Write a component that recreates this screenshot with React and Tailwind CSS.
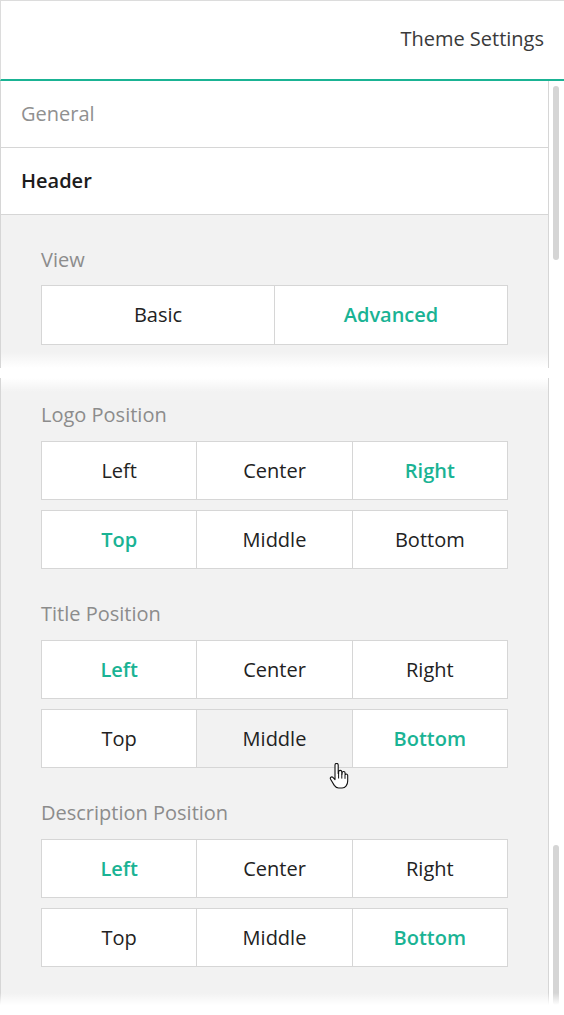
import React from "react";

const GREEN = "text-[#1ab394] font-semibold";

const HandCursor = () => (
  <svg width="20" height="27" viewBox="0 0 20 27" className="absolute left-[132px] top-[53px] pointer-events-none">
    <path
      d="M6 2a1.6 1.6 0 0 1 3.2 0v8.5h.4V9a1.6 1.6 0 0 1 3.2 0v2h.3v-1a1.5 1.5 0 0 1 3 0v1.5h.2a1.4 1.4 0 0 1 2.4 1V18c0 3.5-2.2 7-5.6 7H9.6c-2 0-3.2-1-4.3-2.6L1.6 16.2a1.5 1.5 0 0 1 2.3-1.9L6 16.6Z"
      fill="#fff"
      stroke="#111"
      strokeWidth="1.1"
      strokeLinejoin="round"
    />
    <path d="M9.6 10.5v5M12.8 11v4.6M16 12v3.8" stroke="#111" strokeWidth="1" fill="none" />
  </svg>
);

const Segment = ({ items, active, hovered, tall }) => (
  <div
    className={`flex border border-[#d6d6d6] bg-white divide-x divide-[#d6d6d6] ${tall ? "h-[60px]" : "h-[59px]"}`}
  >
    {items.map((item) => (
      <div
        key={item}
        className={`relative flex-1 flex items-center justify-center text-[20px] ${
          item === active ? GREEN : "text-[#222]"
        } ${item === hovered ? "bg-[#f2f2f2]" : ""}`}
      >
        {item}
        {item === hovered && <HandCursor />}
      </div>
    ))}
  </div>
);

const Group = ({ label, rows }) => (
  <div className="pt-[11px] pb-[22px]">
    <div className="h-[24px] leading-[24px] text-[20px] text-[#8c8c8c] mb-[14px]">{label}</div>
    <div className="flex flex-col gap-[10px]">
      {rows.map((r, i) => (
        <Segment key={i} items={r.items} active={r.active} hovered={r.hovered} />
      ))}
    </div>
  </div>
);

export default function App() {
  return (
    <div className="relative w-[564px] h-[1015px] overflow-hidden bg-white font-['Open_Sans',sans-serif]">
      <header className="h-[81px] border-t border-l border-[#dcdcdc] border-b-2 border-b-[#1ab394] flex items-center justify-end pr-[20px] pb-[2px] text-[20px] text-[#3a3a3a]">
        Theme Settings
      </header>

      {/* upper part */}
      <div className="flex">
        <div className="w-[549px] border-l border-r border-[#d6d6d6]">
          <div className="h-[67px] border-b border-[#d6d6d6] flex items-center pl-[20px] text-[20px] text-[#909090]">
            General
          </div>
          <div className="h-[67px] border-b border-[#d6d6d6] flex items-center pl-[20px] text-[20px] font-semibold text-[#1c1c1c]">
            Header
          </div>
          <div className="bg-[#f2f2f2] px-[40px] pt-[33px] pb-[7px]">
            <div className="h-[24px] leading-[24px] text-[20px] text-[#8c8c8c] mb-[13px]">View</div>
            <Segment items={["Basic", "Advanced"]} active="Advanced" tall />
          </div>
          <div className="h-[16px] bg-linear-to-b from-[#f2f2f2] to-white" />
        </div>
        <div className="w-[15px]">
          <div className="ml-[4px] mt-[5px] w-[6px] h-[174px] rounded-full bg-[#d5d5d5]" />
        </div>
      </div>

      <div className="h-[10px] bg-white" />

      {/* lower part */}
      <div className="flex">
        <div className="w-[549px] border-l border-r border-[#d6d6d6]">
          <div className="h-[14px] bg-linear-to-b from-white to-[#f2f2f2]" />
          <div className="bg-[#f2f2f2] px-[40px] pb-[60px]">
            <Group
              label="Logo Position"
              rows={[
                { items: ["Left", "Center", "Right"], active: "Right" },
                { items: ["Top", "Middle", "Bottom"], active: "Top" },
              ]}
            />
            <Group
              label="Title Position"
              rows={[
                { items: ["Left", "Center", "Right"], active: "Left" },
                { items: ["Top", "Middle", "Bottom"], active: "Bottom", hovered: "Middle" },
              ]}
            />
            <Group
              label="Description Position"
              rows={[
                { items: ["Left", "Center", "Right"], active: "Left" },
                { items: ["Top", "Middle", "Bottom"], active: "Bottom" },
              ]}
            />
          </div>
        </div>
        <div className="w-[15px]">
          <div className="ml-[4px] mt-[467px] w-[6px] h-[160px] rounded-full bg-[#d5d5d5]" />
        </div>
      </div>

      <div className="absolute left-0 right-0 bottom-0 h-[22px] bg-linear-to-b from-transparent to-white to-55%" />
    </div>
  );
}
